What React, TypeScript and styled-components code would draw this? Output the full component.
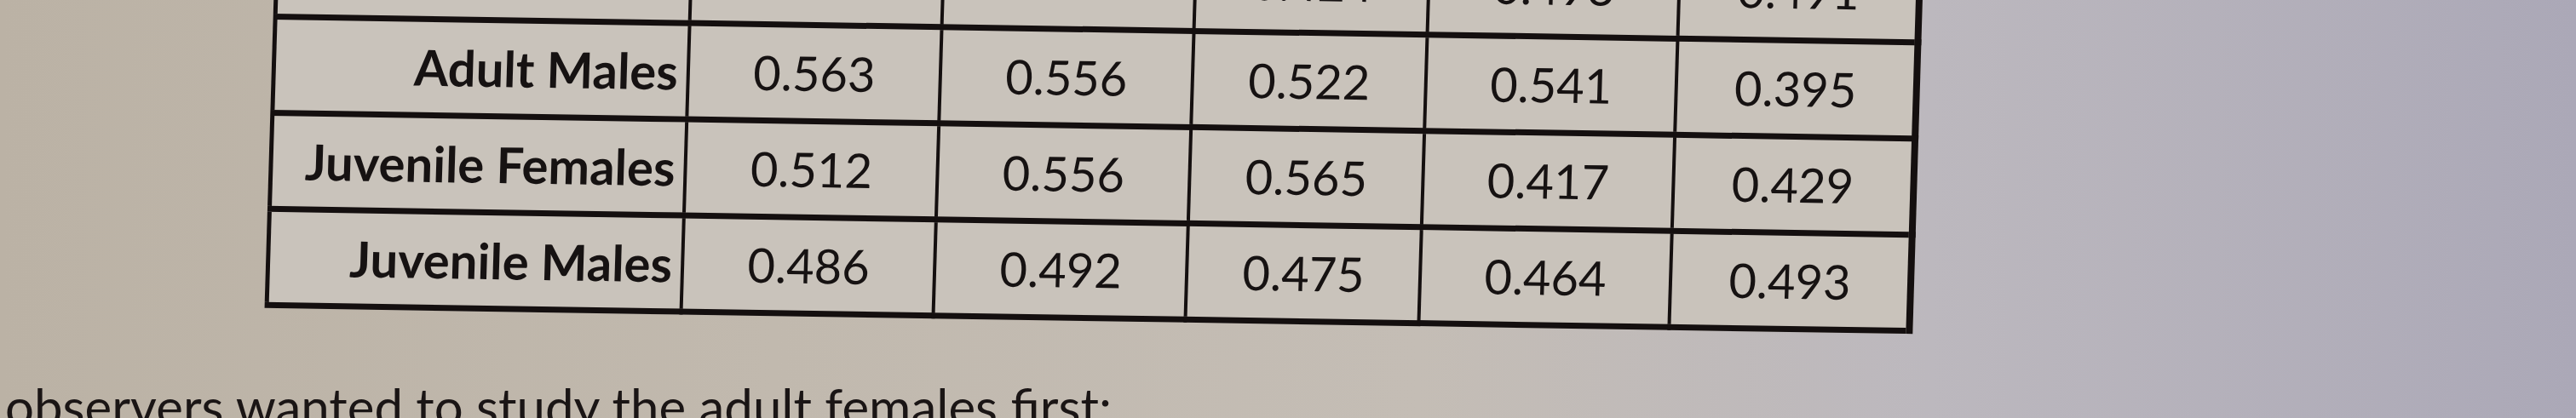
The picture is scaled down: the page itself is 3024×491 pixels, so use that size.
import styled, { createGlobalStyle } from 'styled-components';

const GlobalStyle = createGlobalStyle`
  html, body {
    margin: 0;
    padding: 0;
  }
  body {
    width: 3024px;
    height: 491px;
    overflow: hidden;
    font-family: Lato, 'Open Sans', 'Liberation Sans', sans-serif;
  }
`;

const Paper = styled.main`
  width: 3024px;
  height: 491px;
  overflow: hidden;
  display: flex;
  flex-direction: column;
  background: linear-gradient(
    90deg,
    #bbb2a5 0%,
    #c1b9ae 30%,
    #c4bdb5 55%,
    #bcb8be 75%,
    #aba8b7 100%
  );
  color: #161212;
`;

const TableWrap = styled.div`
  margin: -79px 0 0 318px;
  transform: rotate(0.9deg) skewX(-0.8deg);
  transform-origin: 960px 200px;
`;

const Grid = styled.table`
  border-collapse: collapse;
  background: #c9c3bb;
  border-right: 8px solid #140f0f;
  border-left: 5px solid #140f0f;
`;

const Row = styled.tr`
  height: 113px;
  border-bottom: 7px solid #140f0f;
`;

const Label = styled.th`
  width: 472px;
  padding: 0 10px 0 0;
  text-align: right;
  font-weight: 700;
  font-size: 58px;
  letter-spacing: 0;
  border-right: 4px solid #140f0f;
`;

const Value = styled.td<{ $w: number }>`
  width: ${(p) => p.$w}px;
  padding: 0;
  text-align: center;
  font-weight: 400;
  font-size: 56px;
  border-right: 4px solid #140f0f;

  &:last-child {
    border-right: none;
  }
`;

const Sentence = styled.p`
  margin: 64px 0 0 6px;
  font-size: 60px;
  letter-spacing: 0;
  white-space: nowrap;
  color: #1a1515;
`;

const widths = [292, 292, 270, 290, 276];

const rows: { label: string; values: string[] }[] = [
  { label: 'Adult Females', values: ['0.571', '0.538', '0.424', '0.493', '0.491'] },
  { label: 'Adult Males', values: ['0.563', '0.556', '0.522', '0.541', '0.395'] },
  { label: 'Juvenile Females', values: ['0.512', '0.556', '0.565', '0.417', '0.429'] },
  { label: 'Juvenile Males', values: ['0.486', '0.492', '0.475', '0.464', '0.493'] },
];

const App = () => {
  return (
    <>
      <GlobalStyle />
      <Paper>
        <TableWrap>
          <Grid>
            <tbody>
              {rows.map((row) => (
                <Row key={row.label}>
                  <Label>{row.label}</Label>
                  {row.values.map((v, i) => (
                    <Value key={i} $w={widths[i]}>
                      {v}
                    </Value>
                  ))}
                </Row>
              ))}
            </tbody>
          </Grid>
        </TableWrap>
        <Sentence>observers wanted to study the adult females first:</Sentence>
      </Paper>
    </>
  );
};

export default App;
